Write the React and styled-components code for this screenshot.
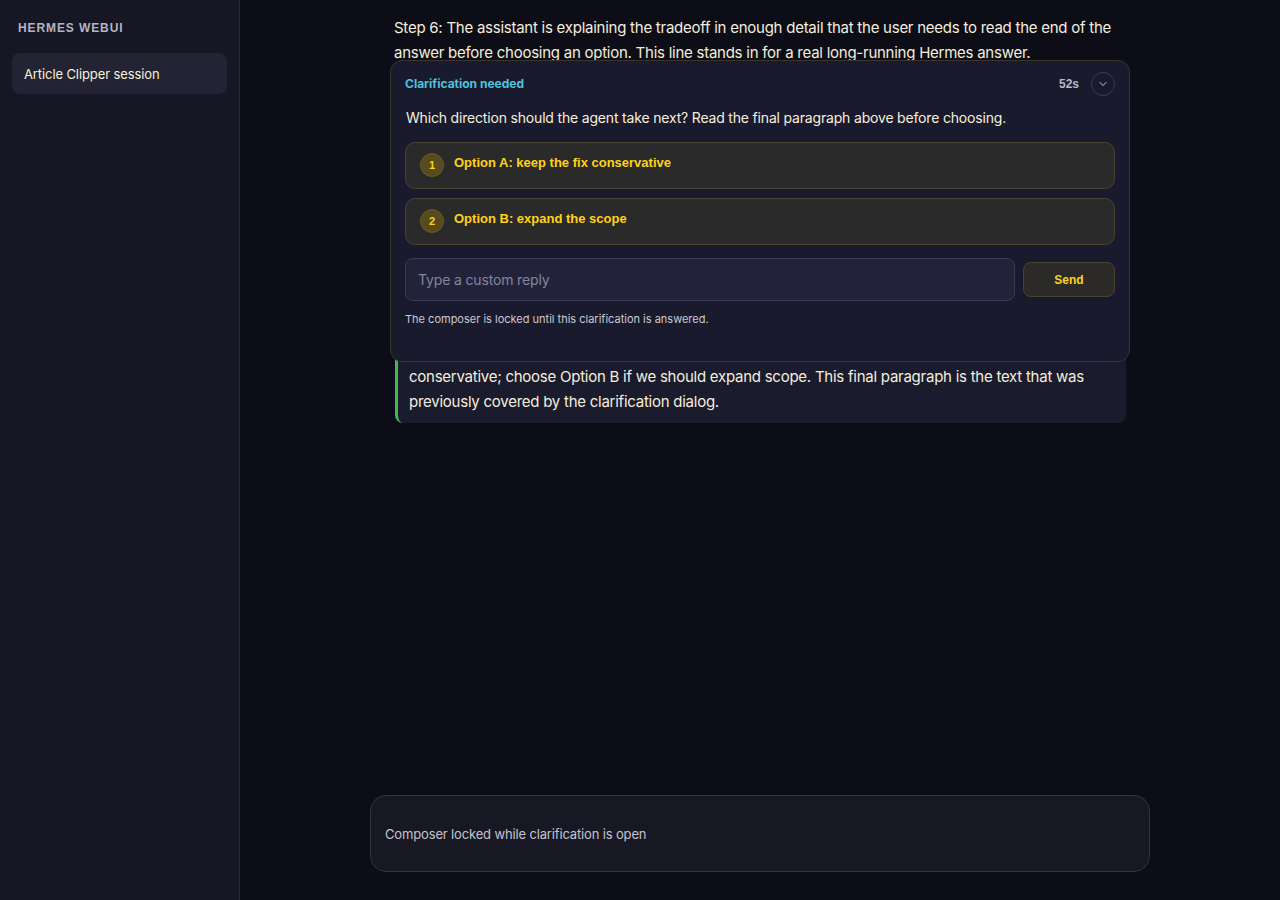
import React from 'react';
import styled, { createGlobalStyle } from 'styled-components';
import { ChevronDown } from 'lucide-react';

const GlobalStyle = createGlobalStyle`
  html, body, #root {
    margin: 0;
    height: 100%;
  }
  body {
    background: #0d0d17;
    font-family: Inter, "Noto Sans", sans-serif;
    color: #f4eedc;
  }
  * {
    box-sizing: border-box;
  }
`;

const Shell = styled.div`
  display: flex;
  height: 100vh;
`;

const Sidebar = styled.aside`
  width: 240px;
  flex-shrink: 0;
  background: #161625;
  border-right: 1px solid #2a2a3a;
  padding: 21px 12px;
`;

const Brand = styled.div`
  font-family: "Liberation Sans", Arial, sans-serif;
  font-size: 12px;
  font-weight: 700;
  letter-spacing: 0.9px;
  color: #b4b4c0;
  padding: 0 6px;
  margin-bottom: 18px;
`;

const SessionItem = styled.div`
  background: #232333;
  border-radius: 8px;
  height: 41px;
  display: flex;
  align-items: center;
  padding: 0 12px;
  font-size: 13px;
  letter-spacing: -0.1px;
  color: #f6f0dc;
`;

const Main = styled.main`
  flex: 1;
  display: flex;
  flex-direction: column;
  min-width: 0;
`;

const Messages = styled.div`
  flex: 1;
  overflow: hidden;
  padding-top: 15px;
`;

const Column = styled.div`
  position: relative;
  width: 732px;
  margin: 0 auto;
`;

const MessageText = styled.p`
  margin: 0;
  font-size: 15px;
  line-height: 25px;
  letter-spacing: -0.25px;
  color: #f4eedc;
`;

const AnswerBlock = styled.div`
  margin-top: 265px;
  background: #1b1b2e;
  border-left: 3px solid #3fb950;
  border-radius: 0 8px 8px 8px;
  padding: 9px 15px 9px 11px;
  margin-left: 1px;
`;

const ClarifyCard = styled.section`
  position: absolute;
  top: 45px;
  left: -4px;
  width: 740px;
  height: 302px;
  background: #1a1a2e;
  border: 1px solid #3a3524;
  border-radius: 12px;
  padding: 11px 14px;
  z-index: 2;
`;

const CardHeader = styled.div`
  display: flex;
  align-items: center;
  justify-content: space-between;
  height: 24px;
`;

const CardTitle = styled.div`
  font-size: 12px;
  font-weight: 700;
  color: #4cc4dc;
  margin-top: -1px;
`;

const HeaderRight = styled.div`
  display: flex;
  align-items: center;
  gap: 12px;
`;

const Timer = styled.span`
  font-family: "Liberation Sans", Arial, sans-serif;
  font-size: 12px;
  font-weight: 700;
  color: #b8b8c2;
`;

const CollapseButton = styled.button`
  width: 24px;
  height: 24px;
  border-radius: 50%;
  border: 1px solid #3a3a52;
  background: transparent;
  color: #c8c8d4;
  display: flex;
  align-items: center;
  justify-content: center;
  padding: 0;
`;

const Question = styled.div`
  margin-top: 12px;
  font-size: 14px;
  line-height: 20px;
  letter-spacing: -0.18px;
  color: #f6f0dc;
  padding-left: 1px;
`;

const OptionList = styled.div`
  display: flex;
  flex-direction: column;
  gap: 9px;
  margin-top: 14px;
`;

const OptionButton = styled.button`
  display: flex;
  align-items: flex-start;
  gap: 10px;
  height: 47px;
  width: 100%;
  text-align: left;
  background: #2b2a2b;
  border: 1px solid #4a4330;
  border-radius: 10px;
  padding: 10px 14px;
  font-family: "Liberation Sans", Arial, sans-serif;
  font-size: 13px;
  font-weight: 700;
  color: #ffd21a;
`;

const OptionNumber = styled.span`
  width: 24px;
  height: 24px;
  flex-shrink: 0;
  border-radius: 50%;
  background: #574a1e;
  border: 1px solid #6a5a26;
  display: flex;
  align-items: center;
  justify-content: center;
  font-size: 11px;
  color: #ffd21a;
`;

const OptionLabel = styled.span`
  line-height: 18px;
  padding-top: 1px;
`;

const ReplyRow = styled.div`
  display: flex;
  align-items: center;
  gap: 8px;
  margin-top: 13px;
`;

const ReplyInput = styled.input`
  flex: 1;
  height: 43px;
  background: #22223a;
  border: 1px solid #3a3a50;
  border-radius: 8px;
  padding: 0 12px;
  font-family: Inter, "Noto Sans", sans-serif;
  font-size: 14px;
  letter-spacing: -0.15px;
  color: #f4eedc;
  outline: none;

  &::placeholder {
    color: #85859a;
  }
`;

const SendButton = styled.button`
  width: 92px;
  height: 35px;
  background: #2b2a28;
  border: 1px solid #4a4330;
  border-radius: 8px;
  font-family: "Liberation Sans", Arial, sans-serif;
  font-size: 12px;
  font-weight: 700;
  color: #ffd21a;
`;

const Hint = styled.div`
  margin-top: 11px;
  font-size: 11px;
  color: #cacad2;
`;

const ComposerWrap = styled.div`
  padding: 0 0 28px;
  display: flex;
  justify-content: center;
`;

const Composer = styled.div`
  width: 780px;
  height: 77px;
  background: #181824;
  border: 1px solid #34343f;
  border-radius: 16px;
  display: flex;
  align-items: center;
  padding: 0 14px;
  font-size: 13px;
  letter-spacing: -0.15px;
  color: #c4c4cc;
`;

const options = [
  'Option A: keep the fix conservative',
  'Option B: expand the scope',
];

export default function App() {
  return (
    <>
      <GlobalStyle />
      <Shell>
        <Sidebar>
          <Brand>HERMES WEBUI</Brand>
          <SessionItem>Article Clipper session</SessionItem>
        </Sidebar>

        <Main>
          <Messages>
            <Column>
              <MessageText>
                Step 6: The assistant is explaining the tradeoff in enough detail that the user needs to read the end of the
                answer before choosing an option. This line stands in for a real long-running Hermes answer.
              </MessageText>

              <AnswerBlock>
                <MessageText>
                  Final paragraph: after weighing both paths, choose Option A if we should keep the fix and stay
                  conservative; choose Option B if we should expand scope. This final paragraph is the text that was
                  previously covered by the clarification dialog.
                </MessageText>
              </AnswerBlock>

              <ClarifyCard>
                <CardHeader>
                  <CardTitle>Clarification needed</CardTitle>
                  <HeaderRight>
                    <Timer>52s</Timer>
                    <CollapseButton aria-label="Collapse">
                      <ChevronDown size={12} strokeWidth={2} />
                    </CollapseButton>
                  </HeaderRight>
                </CardHeader>

                <Question>
                  Which direction should the agent take next? Read the final paragraph above before choosing.
                </Question>

                <OptionList>
                  {options.map((label, i) => (
                    <OptionButton key={label}>
                      <OptionNumber>{i + 1}</OptionNumber>
                      <OptionLabel>{label}</OptionLabel>
                    </OptionButton>
                  ))}
                </OptionList>

                <ReplyRow>
                  <ReplyInput placeholder="Type a custom reply" />
                  <SendButton>Send</SendButton>
                </ReplyRow>

                <Hint>The composer is locked until this clarification is answered.</Hint>
              </ClarifyCard>
            </Column>
          </Messages>

          <ComposerWrap>
            <Composer>Composer locked while clarification is open</Composer>
          </ComposerWrap>
        </Main>
      </Shell>
    </>
  );
}
